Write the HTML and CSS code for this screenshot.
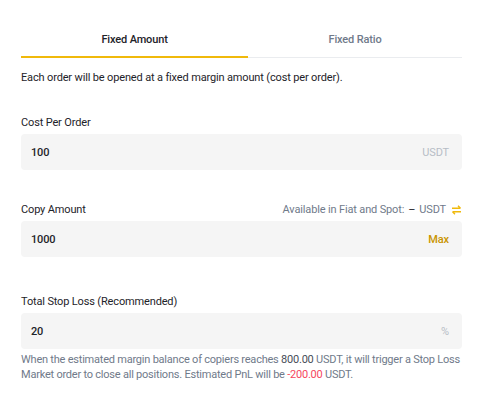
FILE: index.html
```html
<!doctype html>
<html>
<head>
<title>Copy Trading</title>
<link rel="stylesheet" href="styles.css">
</head>
<body>
<div class="panel">
	<div class="tabs">
		<div class="tab active">Fixed Amount</div>
		<div class="tab">Fixed Ratio</div>
	</div>
	<p class="desc">Each order will be opened at a fixed margin amount (cost per order).</p>

	<div class="field first">
		<div class="label">Cost Per Order</div>
		<div class="input"><span class="val">100</span><span class="unit">USDT</span></div>
	</div>

	<div class="field second">
		<div class="label">
			<span>Copy Amount</span>
			<span class="avail">Available in Fiat and Spot: <b>&ndash;</b> USDT
				<svg class="swap" width="11" height="10" viewBox="0 0 11 10"><path d="M1 3.2h8.5M7 0.8l2.5 2.4M10 6.8H1.5M4 9.2L1.5 6.8" stroke="#F0B90B" stroke-width="1.4" fill="none"/></svg>
			</span>
		</div>
		<div class="input"><span class="val">1000</span><span class="unit max">Max</span></div>
	</div>

	<div class="field third">
		<div class="label">Total Stop Loss (Recommended)</div>
		<div class="input"><span class="val">20</span><span class="unit">%</span></div>
		<p class="hint">When the estimated margin balance of copiers reaches <span class="dark">800.00</span> USDT, it will trigger a Stop Loss Market order to close all positions. Estimated PnL will be <span class="neg">-200.00</span> USDT.</p>
	</div>
</div>
</body>
</html>
```
FILE: styles.css
```css
body {
	margin: 0;
	background: #fff;
	font-family: Roboto, "Liberation Sans", sans-serif;
	font-size: 11px;
	letter-spacing: -0.15px;
	color: #1e2329;
}
.panel {
	width: 441px;
	margin-left: 21px;
	padding-top: 21px;
}
.tabs {
	display: flex;
	border-bottom: 1px solid #eaecef;
}
.tab {
	flex: 1 1 auto;
	text-align: center;
	height: 36px;
	line-height: 38px;
	font-weight: 500;
	color: #707a8a;
}
.tab.active {
	color: #1e2329;
	border-bottom: 2px solid #f0b90b;
	margin-bottom: -1px;
	height: 35px;
}
.desc {
	margin: 11px 0 0;
	line-height: 18px;
}
.label {
	display: flex;
	justify-content: space-between;
	align-items: center;
	line-height: 18px;
	margin-bottom: 2px;
}
.avail {
	color: #707a8a;
	display: flex;
	align-items: center;
	gap: 4px;
}
.avail b {
	color: #1e2329;
	font-weight: normal;
}
.swap {
	margin-left: 1px;
}
.input {
	display: flex;
	justify-content: space-between;
	align-items: center;
	height: 36px;
	background: #f5f5f5;
	border-radius: 4px;
	padding: 0 13px 0 10px;
	font-weight: 500;
}
.unit {
	color: #b7bdc6;
	font-weight: normal;
}
.unit.max {
	color: #c99400;
	font-weight: 500;
}
.field.first {
	margin-top: 27px;
}
.field.second {
	margin-top: 31px;
}
.field.third {
	margin-top: 36px;
}
.hint {
	margin: 3px 0 0;
	line-height: 15px;
	letter-spacing: -0.22px;
	color: #707a8a;
}
.hint .dark {
	color: #474d57;
}
.neg {
	color: #f6465d;
}
```
